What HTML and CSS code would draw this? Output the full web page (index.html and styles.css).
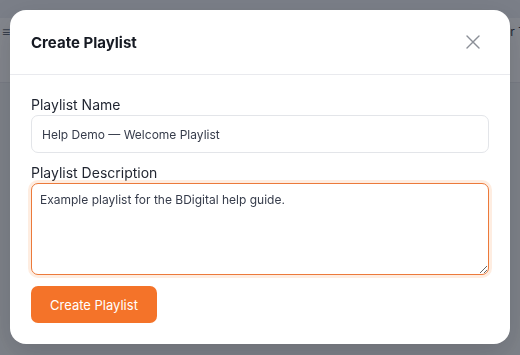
FILE: index.html
```html
<!DOCTYPE html>
<html>
<head>
    <title>Create Playlist</title>
    <link rel="stylesheet" href="styles.css">
</head>
<body>
    <div class="page">
        <div class="topbar"></div>
        <div class="toolbar">
            <span class="menu-icon">&#8801;</span>
            <span class="toolbar-text">or T</span>
        </div>
    </div>

    <div class="overlay">
        <div class="modal">
            <div class="modal-header">
                <h2>Create Playlist</h2>
                <button class="close-btn" aria-label="Close">
                    <svg width="14" height="14" viewBox="0 0 14 14">
                        <path d="M1 1L13 13M13 1L1 13" stroke="#8b8f97" stroke-width="1.4" stroke-linecap="round"/>
                    </svg>
                </button>
            </div>
            <div class="modal-body">
                <label for="playlist-name">Playlist Name</label>
                <input id="playlist-name" type="text" value="Help Demo — Welcome Playlist">

                <label for="playlist-desc">Playlist Description</label>
                <textarea id="playlist-desc" class="focused">Example playlist for the BDigital help guide.</textarea>

                <button class="create-btn">Create Playlist</button>
            </div>
        </div>
    </div>
</body>
</html>
```

FILE: styles.css
```css
body {
    margin: 0;
    font-family: Inter, 'Noto Sans', sans-serif;
    background: #f3f4f6;
    height: 355px;
    overflow: hidden;
}
.topbar {
    height: 20px;
    background: #eceef2;
}
.toolbar {
    height: 64px;
    background: #ffffff;
    border-bottom: 1px solid #e5e7eb;
    display: flex;
    align-items: center;
    justify-content: space-between;
    padding: 0 0 0 2px;
    margin-top: -2px;
}
.menu-icon {
    font-size: 14px;
    color: #4b5563;
    margin-top: -38px;
}
.toolbar-text {
    font-size: 12px;
    color: #111827;
    margin-top: -38px;
    margin-right: -6px;
}
.overlay {
    position: fixed;
    inset: 0;
    background: rgba(42, 46, 58, 0.58);
    padding: 10px;
}
.modal {
    width: 500px;
    background: #ffffff;
    border-radius: 16px;
    box-shadow: 0 10px 30px rgba(0,0,0,0.15);
}
.modal-header {
    display: flex;
    align-items: center;
    justify-content: space-between;
    height: 64px;
    padding: 0 30px 0 21px;
    border-bottom: 1px solid #e9eaee;
}
.modal-header h2 {
    margin: 0;
    font-size: 15px;
    font-weight: 700;
    color: #161a23;
}
.close-btn {
    border: none;
    background: none;
    padding: 0;
    display: flex;
    cursor: pointer;
}
.modal-body {
    padding: 20px 21px 21px;
    display: flex;
    flex-direction: column;
    align-items: flex-start;
}
label {
    font-size: 14px;
    line-height: 20px;
    color: #1f2430;
}
input, textarea {
    box-sizing: border-box;
    width: 458px;
    font-family: Inter, 'Noto Sans', sans-serif;
    font-size: 12px;
    color: #363c4b;
    border: 1px solid #e3e5e9;
    border-radius: 7px;
    outline: none;
}
input {
    height: 38px;
    padding: 0 10px;
    margin-bottom: 10px;
}
textarea {
    height: 92px;
    padding: 8px 8px;
    resize: vertical;
    line-height: 16px;
}
textarea.focused {
    border-color: #ec7a3b;
    box-shadow: 0 0 0 3px rgba(249, 115, 22, 0.13);
}
.create-btn {
    margin-top: 11px;
    height: 37px;
    padding: 0 19px;
    border: none;
    border-radius: 7px;
    background: #f47329;
    color: #ffffff;
    font-family: Inter, 'Noto Sans', sans-serif;
    font-size: 13px;
    cursor: pointer;
}
```
